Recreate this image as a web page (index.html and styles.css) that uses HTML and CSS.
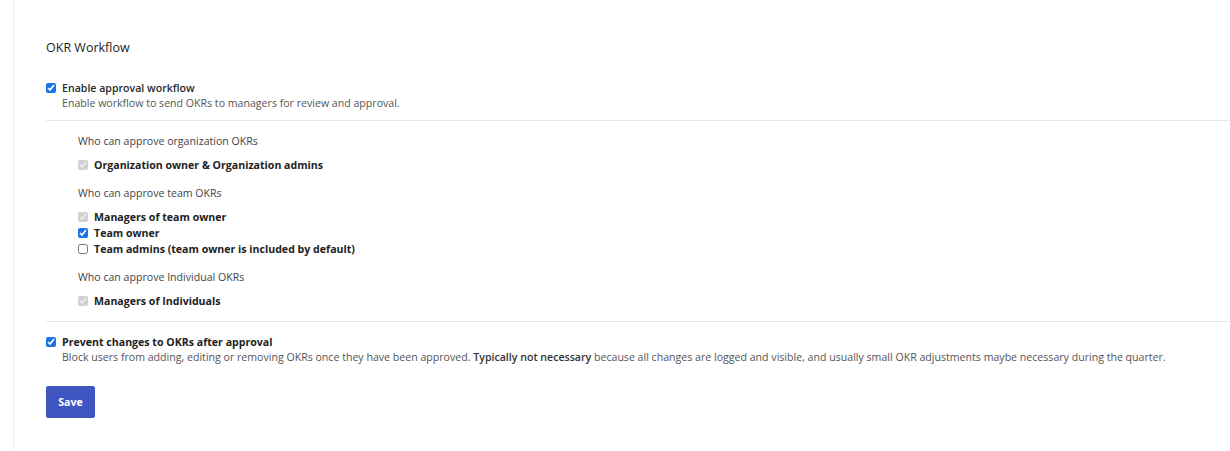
FILE: index.html
```html
<!DOCTYPE html>
<html>
<head>
<meta charset="utf-8">
<link rel="stylesheet" href="styles.css">
</head>
<body>
<div class="page">
  <section class="panel">
    <h2 class="title">OKR Workflow</h2>

    <div class="option">
      <label class="check-row">
        <input type="checkbox" checked>
        <span class="label medium">Enable approval workflow</span>
      </label>
      <p class="desc">Enable workflow to send OKRs to managers for review and approval.</p>
    </div>

    <hr class="divider">

    <div class="approvers">
      <p class="group-title">Who can approve organization OKRs</p>
      <label class="check-row">
        <input type="checkbox" checked disabled>
        <span class="label bold">Organization owner &amp; Organization admins</span>
      </label>

      <p class="group-title">Who can approve team OKRs</p>
      <label class="check-row">
        <input type="checkbox" checked disabled>
        <span class="label bold">Managers of team owner</span>
      </label>
      <label class="check-row">
        <input type="checkbox" checked>
        <span class="label bold">Team owner</span>
      </label>
      <label class="check-row">
        <input type="checkbox">
        <span class="label bold">Team admins (team owner is included by default)</span>
      </label>

      <p class="group-title">Who can approve Individual OKRs</p>
      <label class="check-row">
        <input type="checkbox" checked disabled>
        <span class="label bold">Managers of Individuals</span>
      </label>
    </div>

    <hr class="divider">

    <div class="option">
      <label class="check-row">
        <input type="checkbox" checked>
        <span class="label bold">Prevent changes to OKRs after approval</span>
      </label>
      <p class="desc">Block users from adding, editing or removing OKRs once they have been approved. <strong>Typically not necessary</strong> because all changes are logged and visible, and usually small OKR adjustments maybe necessary during the quarter.</p>
    </div>

    <button class="save" type="button">Save</button>
  </section>
</div>
</body>
</html>
```

FILE: styles.css
```css
* { box-sizing: border-box; }
html, body { margin: 0; padding: 0; background: #fff; }
body {
  font-family: "Open Sans", "Noto Sans", sans-serif;
  color: #333;
  font-size: 10.6px;
}
.page {
  padding-left: 13px;
  min-height: 451px;
}
.panel {
  border-left: 1px solid #ececec;
  min-height: 451px;
  padding: 40px 0 0 32px;
}
.title {
  margin: 0 0 24px;
  font-size: 12.5px;
  font-weight: 400;
  color: #1e1e1e;
  line-height: 16px;
}
.check-row {
  display: flex;
  align-items: center;
  gap: 6px;
  height: 16px;
  line-height: 16px;
}
.option .check-row { height: 15px; }
.check-row input {
  margin: 0;
  width: 10px;
  height: 10px;
  accent-color: #1a73e8;
}
.label { color: #222; }
.label.medium { font-weight: 600; color: #2a2a2a; }
.label.bold { font-weight: 700; }
.desc {
  margin: 0 0 0 16px;
  color: #555;
  line-height: 16px;
}
.desc strong { font-weight: 600; color: #333; }
.divider {
  border: 0;
  border-top: 1px solid #e6e6e6;
  margin: 9px 0 0;
}
.approvers {
  padding: 12px 0 3px 32px;
}
.group-title {
  margin: 0 0 8px;
  line-height: 16px;
  color: #444;
}
.approvers .check-row + .group-title { margin-top: 12px; }
.divider + .option { margin-top: 12px; }
.save {
  margin-top: 21px;
  width: 49px;
  height: 32px;
  background: #3f55c0;
  color: #fff;
  border: 0;
  border-radius: 2px;
  font-family: inherit;
  font-size: 10.6px;
  font-weight: 700;
}
```
